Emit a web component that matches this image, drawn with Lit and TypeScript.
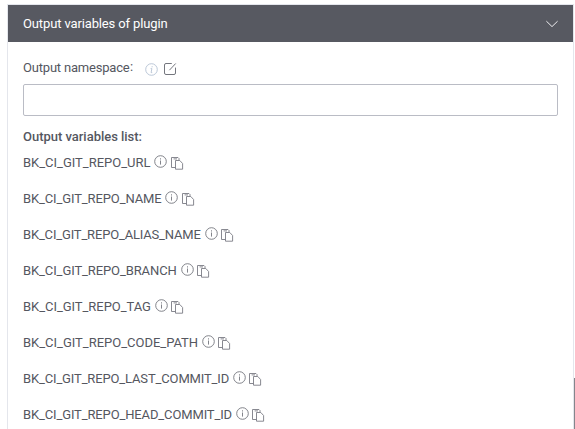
import { LitElement, html, css, svg } from "lit";
import { customElement } from "lit/decorators.js";
import { styleMap } from "lit/directives/style-map.js";

interface OutputVariable {
  name: string;
  width: number;
}

const variables: OutputVariable[] = [
  { name: "BK_CI_GIT_REPO_URL", width: 127.5 },
  { name: "BK_CI_GIT_REPO_NAME", width: 138.5 },
  { name: "BK_CI_GIT_REPO_ALIAS_NAME", width: 177.7 },
  { name: "BK_CI_GIT_REPO_BRANCH", width: 153.7 },
  { name: "BK_CI_GIT_REPO_TAG", width: 127.9 },
  { name: "BK_CI_GIT_REPO_CODE_PATH", width: 175.1 },
  { name: "BK_CI_GIT_REPO_LAST_COMMIT_ID", width: 206.1 },
  { name: "BK_CI_GIT_REPO_HEAD_COMMIT_ID", width: 209 },
];

const measure = document.createElement("canvas").getContext("2d")!;

/** Letter spacing that makes a text of the given font fill a width. */
function tracking(text: string, width: number, font: string): string {
  measure.font = font;
  return `${((width - measure.measureText(text).width) / text.length).toFixed(3)}px`;
}

const infoIcon = html`<svg class="info" width="13" height="13" viewBox="0 0 13 13">
  ${svg`<circle cx="6.5" cy="6.5" r="5.8" /><path d="M6.5 5.5V9.6M6.5 3.3V4.5" />`}
</svg>`;

const infoItalicIcon = html`<svg class="hint" width="13" height="13" viewBox="0 0 13 13">
  ${svg`<circle cx="6.5" cy="6.5" r="5.8" /><path d="M5.6 5.6H6.9L6.1 9.6H7.2M7.2 3.2L7 4.3" />`}
</svg>`;

const editIcon = html`<svg class="edit" width="14" height="14" viewBox="0 0 14 14">
  ${svg`<path d="M8.8 1.5H3Q1.5 1.5 1.5 3V11Q1.5 12.5 3 12.5H11Q12.5 12.5 12.5 11V5.6M6.4 8.2L12.7 1.5" />`}
</svg>`;

const copyIcon = html`<svg class="copy" width="14" height="14" viewBox="0 0 14 14">
  ${svg`<path d="M5.5 11.5H1.5V1.5H8L9 2.5V4M3.6 2.9H7" /><path d="M5.5 4.5H9.8L12.6 7.5V13.2H5.5Z" />`}
</svg>`;

@customElement("app-root")
export class AppRoot extends LitElement {
  static styles = css`
    :host {
      display: block;
      position: relative;
      box-sizing: border-box;
      height: 429px;
      padding: 4px 1px 0 7px;
      overflow: hidden;
      background: #fff;
      color: #55575f;
      font: 13px/18px Roboto, "Liberation Sans", sans-serif;
    }
    .panel {
      box-sizing: border-box;
      height: 425px;
      border: 1px solid #e4e6ec;
      border-bottom: 0;
    }
    header {
      display: flex;
      align-items: center;
      justify-content: space-between;
      height: 37px;
      box-sizing: border-box;
      padding: 0 15px;
      background: #575961;
      color: #fff;
    }
    .content {
      padding: 17px 15px 0;
    }
    .label {
      display: flex;
      align-items: center;
      height: 18px;
    }
    svg {
      display: block;
      flex: none;
      fill: none;
      stroke: #74767e;
      stroke-width: 0.9;
    }
    .chevron {
      stroke: #eeeef0;
      stroke-width: 1;
    }
    .hint {
      margin: 2px 0 0 8.5px;
      stroke: #b4c2d4;
    }
    .edit {
      margin: 1px 0 0 5px;
      stroke-width: 1;
    }
    .colon {
      width: 7px;
      padding-left: 0.5px;
      box-sizing: border-box;
      margin-top: -2px;
    }
    input {
      display: block;
      box-sizing: border-box;
      width: 535px;
      height: 32px;
      margin: 7px 0 0;
      border: 1px solid #babcc5;
      border-radius: 2px;
      background: #fff;
      outline: 0;
    }
    h2 {
      margin: 12px 0 8px;
      font: inherit;
      font-weight: 500;
    }
    ul {
      display: grid;
      gap: 18px;
      margin: 0;
      padding: 0;
      list-style: none;
    }
    li {
      display: flex;
      align-items: center;
      height: 18px;
      white-space: nowrap;
    }
    .text {
      flex: none;
      white-space: nowrap;
    }
    .info {
      margin: -3px 0 0 3.9px;
    }
    .copy {
      margin: 0 0 0 2.4px;
      stroke: #7a7c84;
    }
    .scroll {
      position: absolute;
      right: 0;
      top: 378px;
      bottom: 0;
      width: 1px;
      background: #85868c;
    }
  `;

  private text(value: string, width: number, weight = 400) {
    const style = {
      width: `${width}px`,
      letterSpacing: tracking(value, width, `${weight} 13px Roboto`),
    };
    return html`<span class="text" style=${styleMap(style)}>${value}</span>`;
  }

  render() {
    return html`
      <section class="panel">
        <header>
          ${this.text("Output variables of plugin", 144.5)}
          <svg class="chevron" width="12" height="8" viewBox="0 0 12 8">
            ${svg`<path d="M.4 1.2L6 6.6L11.6 1.2" />`}
          </svg>
        </header>
        <div class="content">
          <div class="label">
            ${this.text("Output namespace", 106.5)}<span class="colon">:</span>${infoItalicIcon}${editIcon}
          </div>
          <input aria-label="Output namespace" />
          <h2>${this.text("Output variables list:", 119, 500)}</h2>
          <ul>
            ${variables.map(
              (v) => html`<li>${this.text(v.name, v.width)}${infoIcon}${copyIcon}</li>`
            )}
          </ul>
        </div>
      </section>
      <div class="scroll"></div>
    `;
  }
}
